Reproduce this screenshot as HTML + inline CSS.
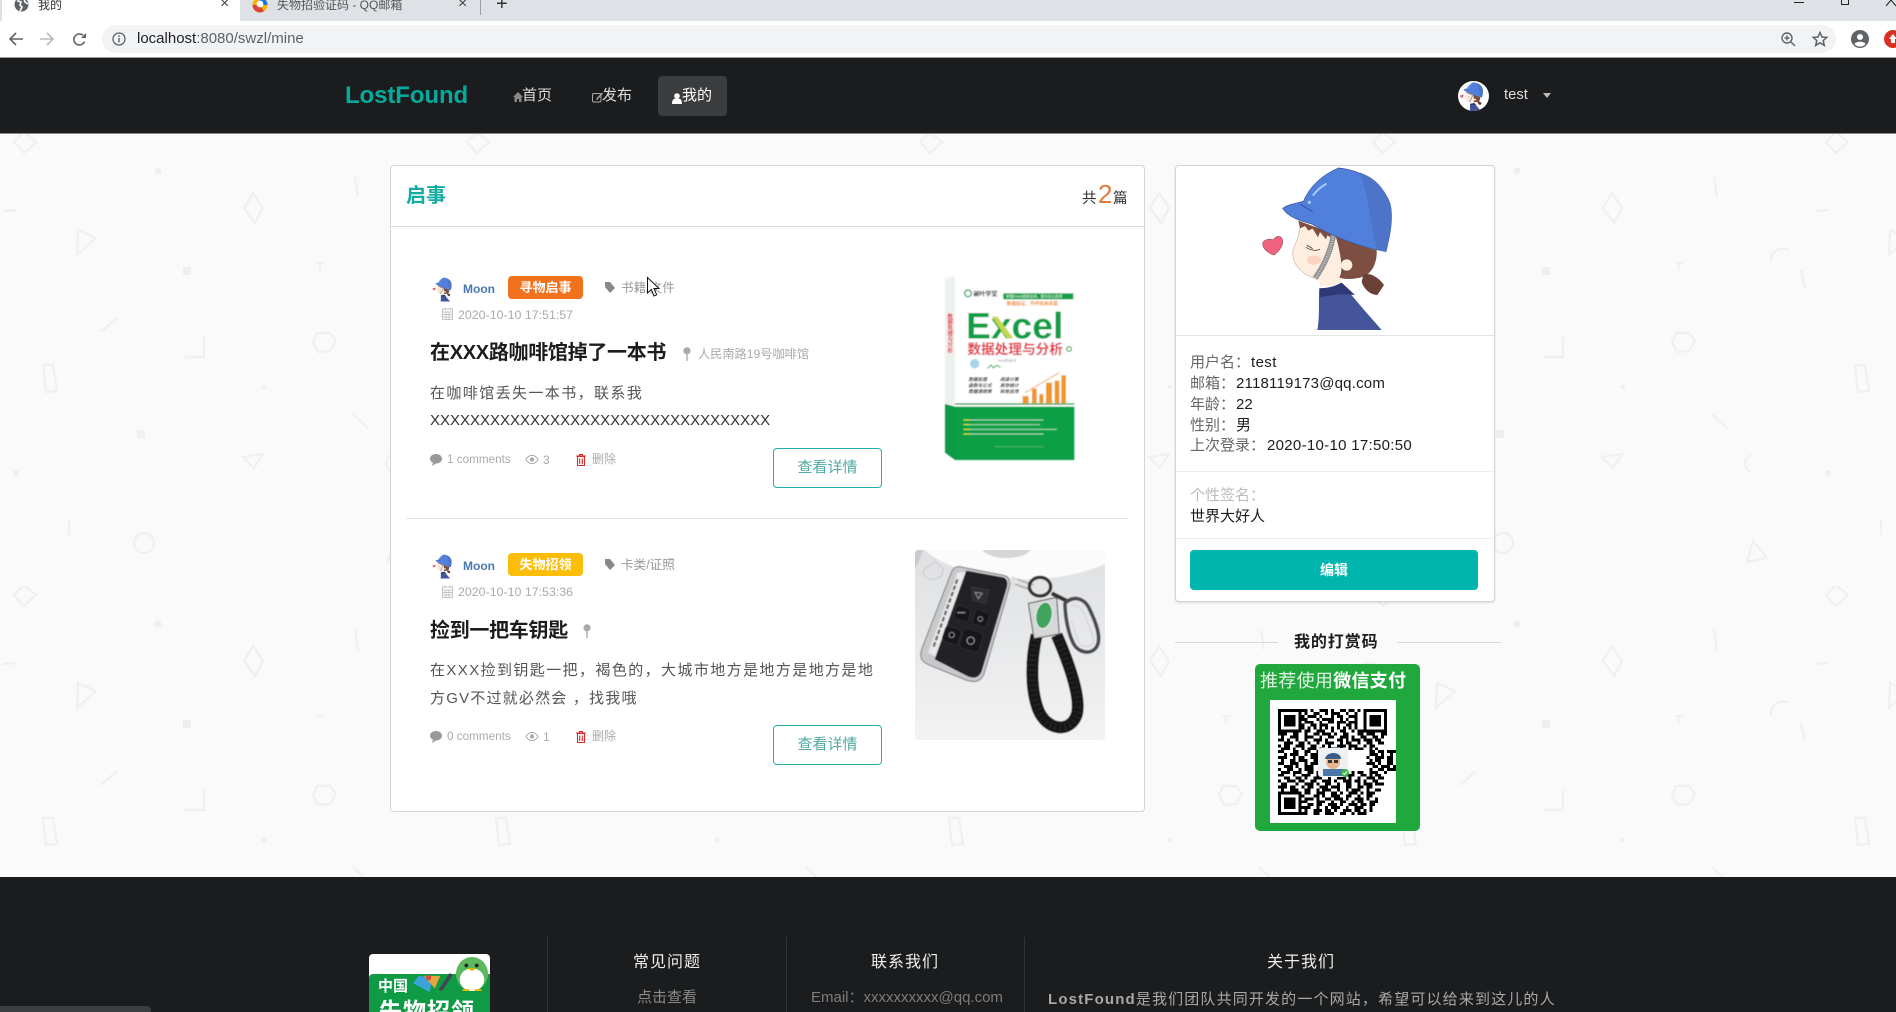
<!DOCTYPE html>
<html lang="zh"><head><meta charset="utf-8"><title>我的</title>
<style>
*{box-sizing:border-box}
html,body{margin:0;padding:0;width:1896px;height:1012px;overflow:hidden;background:#fafafa;font-family:"Liberation Sans","Noto Sans CJK SC",sans-serif}
.a{position:absolute}
.t{position:absolute;white-space:nowrap;line-height:20px;height:20px}
svg{position:absolute;overflow:visible}
.meta{font-size:12.4px;color:#aaa}
.title{font-size:20px;font-weight:700;color:#1b1c1d;letter-spacing:-.3px;line-height:28px;height:28px}
.desc{font-size:15px;color:#555}
.btn{position:absolute;width:109px;height:40px;border:1px solid #1fb0a8;border-radius:4px;background:#fff;color:#4fa9a2;font-size:15px;text-align:center;line-height:38px}
.badge{position:absolute;width:75px;height:23px;border-radius:4px;color:#fff;font-weight:700;font-size:13px;text-align:center;line-height:23px}
.lab{color:#666}.val{color:#1b1c1d}
</style></head><body>
<svg width="0" height="0" style="position:absolute">
<defs>
<filter id="soft" x="-5%" y="-5%" width="110%" height="110%"><feGaussianBlur stdDeviation="1.2"/></filter>
<symbol id="girl" viewBox="0 0 540 540">
<path d="M232 510C240 470 235 420 238 385C270 385 290 375 305 368C345 420 390 470 425 510Z" fill="#44559c"/>
<path d="M238 385C270 385 290 378 305 368L345 405C310 400 270 405 240 412Z" fill="#2e3a78"/>
<path d="M178 195C180 215 175 235 165 255C156 272 158 290 163 305C175 330 195 345 222 355L238 362L240 380C265 380 290 375 305 368L300 340L320 250L285 225L200 195Z" fill="#fdeee0"/>
<path d="M178 205C178 225 172 240 163 258C156 272 158 290 163 305C175 330 195 345 222 355" fill="none" stroke="#b9978a" stroke-width="1.5"/>
<path d="M285 222C310 240 380 265 410 270C412 310 395 340 370 350C340 360 310 358 298 352C312 330 300 270 285 222Z" fill="#7d4e42"/>
<path d="M370 345C385 335 415 350 432 375L412 405C390 405 370 385 365 365Z" fill="#6b4036"/>
<circle cx="320" cy="315" r="17" fill="#fdeee0"/>
<path d="M175 182C195 190 235 205 290 224L285 240L262 226L258 238L240 216L234 232L218 206L205 212L195 198L180 205Z" fill="#7d4e42"/>
<path d="M280 222C275 270 250 320 225 355" fill="none" stroke="#8d8d8d" stroke-width="16"/>
<path d="M280 222C275 270 250 320 225 355" fill="none" stroke="#c9c9c9" stroke-width="9" stroke-dasharray="3 4"/>
<ellipse cx="222" cy="300" rx="22" ry="14" fill="#f9d3c4"/>
<path d="M198 262Q220 276 240 268M200 255L218 266" fill="none" stroke="#5a3a30" stroke-width="2.5"/>
<path d="M128 145C145 132 170 130 190 124C205 90 235 50 295 24C360 30 425 65 450 130C462 175 448 235 438 275L410 269C340 255 265 222 215 192C180 182 145 172 128 145Z" fill="#5080dc" stroke="#3a4f90" stroke-width="2"/>
<path d="M360 38C410 55 435 90 450 130C462 175 448 235 438 275L410 269C395 200 385 110 360 38Z" fill="#4d74c8"/>
<path d="M220 105Q235 85 258 72" fill="none" stroke="#a6c6f6" stroke-width="6" stroke-linecap="round"/>
<circle cx="208" cy="127" r="5" fill="#a6c6f6"/>
<path d="M180 132Q200 145 218 155" fill="none" stroke="#2f4c94" stroke-width="2.5"/>
<path d="M100 240C108 225 128 225 128 245C128 262 112 278 102 285C90 282 68 268 68 252C70 238 90 235 100 240Z" fill="#f0627f" stroke="#a84a5c" stroke-width="2"/>
</symbol>
<pattern id="bg" patternUnits="userSpaceOnUse" width="453" height="453" patternTransform="translate(0,133)">
<g transform="translate(0,-133)" fill="none" stroke="#f0f0f0" stroke-width="2.2">
<path d="M24 132L36 142L24 153L14 142Z"/>
<circle cx="158" cy="171" r="3.6" fill="#efefef" stroke="none"/>
<path d="M355 177L358 197"/>
<path d="M253 193L263 208L255 223L244 208Z"/>
<path d="M3 211L16 210"/>
<path d="M78 230L96 238L77 255Z"/>
<rect x="183" y="267" width="8" height="8" fill="#efefef" stroke="none"/>
<path d="M316 263L324 263M320 263L320 270" stroke-width="1.6"/>
<path d="M101 332L117 318"/>
<path d="M185 357L204 357L204 337"/>
<path d="M317 333L330 333L336 341L330 351L318 352L313 342Z"/>
<path d="M43 365L53 365L57 391L46 392Z"/>
<circle cx="264" cy="387" r="2.2" fill="#efefef" stroke="none"/>
<path d="M353 414L369 429"/>
<rect x="137" y="430" width="8" height="8" fill="#efefef" stroke="none"/>
<path d="M243 457L263 454L254 468Z"/>
<circle cx="16" cy="473" r="3" fill="#efefef" stroke="none"/>
<path d="M392 455A9 9 0 0 0 392 472"/>
<path d="M69 520L69 535"/>
<circle cx="144" cy="543" r="10"/>
<path d="M394 541L408 558L388 562Z"/>
<path d="M412 262A12 12 0 0 1 430 250"/>
<path d="M442 270L446 288"/>
</g></pattern>
</defs></svg>

<!-- page background -->
<svg style="left:0;top:0" width="1896" height="1012"><rect width="1896" height="1012" fill="#fafafa"/><rect width="1896" height="1012" fill="url(#bg)"/></svg>

<!-- browser chrome -->
<div class="a" style="left:0;top:0;width:1896px;height:21px;background:#dee1e6"></div>
<div class="a" style="left:2px;top:0;width:238px;height:21px;background:#fff"></div>
<div class="a" style="left:0;top:21px;width:1896px;height:36px;background:#fff"></div>
<div class="a" style="left:102px;top:25px;width:1734px;height:28px;background:#f1f3f4;border-radius:14px"></div>
<div class="a" style="left:0;top:57px;width:1896px;height:1px;background:#999"></div>
<svg style="left:14px;top:-3px" width="15" height="15" viewBox="0 0 15 15"><circle cx="7.5" cy="7.5" r="7" fill="#5f6368"/><path d="M3 3.5L7 5L6 8L8 10L6 14M10 2L11 5L14 7" stroke="#fff" stroke-width="1.6" fill="none"/></svg>
<div class="t" style="left:38px;top:-5px;font-size:12px;color:#333">我的</div>
<div class="t" style="left:220px;top:-6px;font-size:16px;color:#444">×</div>
<svg style="left:252px;top:-3px" width="16" height="16" viewBox="0 0 16 16"><circle cx="8" cy="8" r="7.5" fill="#f4b400"/><path d="M8 8L.5 8A7.5 7.5 0 0 0 12 14.3Z" fill="#db4437"/><path d="M8 8L15.5 8A7.5 7.5 0 0 0 8 .5Z" fill="#1a73e8"/><circle cx="8" cy="7" r="3.4" fill="#fff"/></svg>
<div class="t" style="left:277px;top:-5px;font-size:12px;color:#555">失物招验证码 - QQ邮箱</div>
<div class="t" style="left:458px;top:-6px;font-size:16px;color:#444">×</div>
<div class="a" style="left:480px;top:0;width:1px;height:15px;background:#9aa0a6"></div>
<div class="t" style="left:496px;top:-6px;font-size:20px;color:#333">+</div>
<div class="a" style="left:1794px;top:2px;width:10px;height:1px;background:#222"></div>
<div class="a" style="left:1841px;top:0;width:8px;height:5px;border:1px solid #222;border-top:0"></div>
<svg style="left:1886px;top:0" width="10" height="6"><path d="M0 6L5 0L10 6" stroke="#222" fill="none"/></svg>
<svg style="left:8px;top:31px" width="16" height="16" viewBox="0 0 16 16"><path d="M15 8H2M8 2L2 8L8 14" fill="none" stroke="#5f6368" stroke-width="1.6"/></svg>
<svg style="left:39px;top:31px" width="16" height="16" viewBox="0 0 16 16"><path d="M1 8H14M8 2L14 8L8 14" fill="none" stroke="#b8bbbf" stroke-width="1.6"/></svg>
<svg style="left:72px;top:32px" width="15" height="15" viewBox="0 0 15 15"><path d="M12.5 9.5A5.5 5.5 0 1 1 11 3.3" fill="none" stroke="#5f6368" stroke-width="1.6"/><path d="M14 1V6H9Z" fill="#5f6368"/></svg>
<svg style="left:112px;top:32px" width="14" height="14" viewBox="0 0 14 14"><circle cx="7" cy="7" r="6" fill="none" stroke="#5f6368" stroke-width="1.3"/><path d="M7 6V10.5M7 3.5V5" stroke="#5f6368" stroke-width="1.4"/></svg>
<div class="t" style="left:137px;top:29px;font-size:15px;color:#202124">localhost<span style="color:#5f6368">:8080/swzl/mine</span></div>
<svg style="left:1781px;top:32px" width="15" height="15" viewBox="0 0 15 15"><circle cx="6" cy="6" r="5" fill="none" stroke="#5f6368" stroke-width="1.4"/><path d="M9.5 9.5L14 14M3.5 6H8.5M6 3.5V8.5" stroke="#5f6368" stroke-width="1.4"/></svg>
<svg style="left:1812px;top:31px" width="16" height="16" viewBox="0 0 16 16"><path d="M8 1.5L10 6L14.8 6.4L11.2 9.6L12.3 14.4L8 11.8L3.7 14.4L4.8 9.6L1.2 6.4L6 6Z" fill="none" stroke="#5f6368" stroke-width="1.5"/></svg>
<svg style="left:1851px;top:30px" width="18" height="18" viewBox="0 0 18 18"><circle cx="9" cy="9" r="9" fill="#5f6368"/><circle cx="9" cy="7" r="3" fill="#fff"/><path d="M3.5 14C5 11 13 11 14.5 14A7 7 0 0 1 3.5 14Z" fill="#fff"/></svg>
<svg style="left:1884px;top:30px" width="18" height="18" viewBox="0 0 18 18"><circle cx="9" cy="9" r="9" fill="#d93025"/><path d="M9 4L13 9H11V13H7V9H5Z" fill="#fff"/></svg>

<!-- navbar -->
<div class="a" style="left:0;top:58px;width:1896px;height:75px;background:#1b1c1e"></div>
<div class="a" style="left:0;top:133px;width:1896px;height:1px;background:#888"></div>
<div class="t" style="left:345px;top:86px;font-size:24px;font-weight:700;color:#06a99c;letter-spacing:-.1px">LostFound</div>
<svg style="left:513px;top:91px" width="10" height="11" viewBox="0 0 10 11"><path d="M5 1L0 6H1.5V11H4V8H6V11H8.5V6H10Z" fill="#888"/></svg>
<div class="t" style="left:522px;top:86px;font-size:15px;color:#ddd">首页</div>
<svg style="left:592px;top:91px" width="11" height="12" viewBox="0 0 11 12"><rect x=".5" y="2.5" width="8.5" height="8.5" rx="1.5" fill="none" stroke="#aaa"/><path d="M4 8L10 1.5L11 2.5L5 9Z" fill="#aaa"/></svg>
<div class="t" style="left:602px;top:86px;font-size:15px;color:#ddd">发布</div>
<div class="a" style="left:658px;top:76px;width:69px;height:40px;background:#3b3c3e;border-radius:4px"></div>
<svg style="left:672px;top:93px" width="10" height="11" viewBox="0 0 10 11"><circle cx="5" cy="3" r="2.8" fill="#fff"/><path d="M0 11C0 6 2 5.5 5 5.5C8 5.5 10 6 10 11Z" fill="#fff"/></svg>
<div class="t" style="left:682px;top:86px;font-size:15px;color:#fff">我的</div>
<div class="a" style="left:1458px;top:81px;width:31px;height:30px;border-radius:50%;background:#fff;overflow:hidden"><svg style="left:-2px;top:0" width="32" height="32"><use href="#girl" width="32" height="32"/></svg></div>
<div class="t" style="left:1504px;top:85px;font-size:14.8px;color:#ddd">test</div>
<svg style="left:1543px;top:93px" width="8" height="5"><path d="M0 0H8L4 5Z" fill="#bbb"/></svg>

<!-- main card -->
<div class="a" style="left:390px;top:165px;width:755px;height:647px;background:#fff;border:1px solid #d4d4d5;border-radius:4px"></div>
<div class="a" style="left:391px;top:226px;width:753px;height:1px;background:#d9d9da"></div>
<div class="t" style="left:406px;top:186px;font-size:20px;font-weight:700;color:#12aca3">启事</div>
<div class="t" style="left:1082px;top:189px;font-size:14.5px;color:#333">共</div>
<div class="t" style="left:1098px;top:184px;font-size:26px;color:#e07b39">2</div>
<div class="t" style="left:1113px;top:189px;font-size:14.5px;color:#333">篇</div>

<!-- item 1 -->
<svg style="left:431px;top:277px" width="22" height="25" viewBox="60 10 400 510"><use href="#girl" width="540" height="540"/></svg>
<div class="t" style="left:463px;top:279px;font-size:12px;font-weight:700;color:#4a78b0">Moon</div>
<div class="badge" style="left:508px;top:276px;background:#f2711c">寻物启事</div>
<svg style="left:605px;top:282px" width="10" height="11" viewBox="0 0 10 11"><path d="M0 0H5L10 6L5 11L0 5Z" fill="#888"/></svg>
<div class="t" style="left:621px;top:278px;font-size:12.6px;color:#999">书籍/文件</div>
<svg style="left:442px;top:307px" width="11" height="13" viewBox="0 0 11 13"><rect x=".5" y="2" width="10" height="10.5" fill="none" stroke="#c4c4c4"/><path d="M.5 2H10.5V5H.5ZM3 .5V3M8 .5V3M.5 7.5H10.5M.5 10H10.5M4 5V12M7 5V12" fill="none" stroke="#c4c4c4"/></svg>
<div class="t meta" style="left:458px;top:305px">2020-10-10 17:51:57</div>
<div class="t title" style="left:430px;top:339px">在XXX路咖啡馆掉了一本书</div>
<svg style="left:683px;top:347px" width="8" height="14" viewBox="0 0 8 14"><circle cx="4" cy="3.8" r="3.6" fill="#aaa"/><rect x="3.3" y="6" width="1.4" height="8" fill="#aaa"/></svg>
<div class="t meta" style="left:698px;top:344px;font-size:12.2px">人民南路19号咖啡馆</div>
<div class="t desc" style="left:430px;top:384px;letter-spacing:1.4px">在咖啡馆丢失一本书，联系我</div>
<div class="t desc" style="left:430px;top:411px;color:#333">XXXXXXXXXXXXXXXXXXXXXXXXXXXXXXXXXX</div>
<svg style="left:430px;top:454px" width="12" height="12" viewBox="0 0 12 12"><path d="M6 0C9.5 0 12 2 12 4.8C12 7.5 9.5 9.5 6 9.5L2 12L3 8.8C1 8 0 6.5 0 4.8C0 2 2.5 0 6 0Z" fill="#999"/></svg>
<div class="t meta" style="left:447px;top:450px;font-size:11.7px">1 comments</div>
<svg style="left:526px;top:455px" width="12" height="9" viewBox="0 0 12 9"><path d="M0 4.5C3 -1 9 -1 12 4.5C9 10 3 10 0 4.5Z" fill="none" stroke="#aaa"/><circle cx="6" cy="4.5" r="2.2" fill="#aaa"/></svg>
<div class="t meta" style="left:543px;top:450px;font-size:12px">3</div>
<svg style="left:576px;top:454px" width="10" height="12" viewBox="0 0 10 12"><path d="M0 2H10M3.5 2V.5H6.5V2M1.5 2.5H8.5V11.5H1.5ZM3.7 4.5V10M6.3 4.5V10" fill="none" stroke="#db2828" stroke-width="1.1"/></svg>
<div class="t meta" style="left:592px;top:449px;font-size:12px">删除</div>
<div class="btn" style="left:773px;top:448px">查看详情</div>

<!-- book -->
<svg style="left:910px;top:260px" width="210" height="210" viewBox="0 0 630 630">
<g filter="url(#soft)">
<path d="M105 55L135 48L135 600L105 578Z" fill="#eef2ee"/>
<rect x="135" y="48" width="358" height="552" fill="#fff"/>
<path d="M105 432L135 440V600L105 578Z" fill="#119a49"/>
<rect x="135" y="440" width="358" height="160" fill="#0e9f45"/>
<rect x="135" y="430" width="358" height="4" fill="#119a49"/>
<rect x="280" y="100" width="210" height="18" fill="#0e9f45"/>
<text x="288" y="112" font-size="11" fill="#fff">掌握Excel函数技术，提升办公效率</text>
<text x="290" y="135" font-size="14" fill="#f28a1a" font-weight="700">数据验证、丹柯范函表面</text>
<circle cx="174" cy="100" r="10" fill="none" stroke="#0e9f45" stroke-width="4"/>
<text x="190" y="108" font-size="18" font-weight="700" fill="#222">副叶学堂</text>
<text x="168" y="235" font-size="112" font-weight="700" fill="#0e9f45" textLength="292" lengthAdjust="spacingAndGlyphs">Excel</text>
<path d="M262 170L310 235H290L245 170Z" fill="#c5d84a"/>
<text x="172" y="282" font-size="41" font-weight="700" fill="#e2353f">数据处理与分析</text>
<circle cx="477" cy="267" r="7" fill="none" stroke="#0e9f45" stroke-width="3.5"/>
<text x="116" y="160" font-size="17" font-weight="700" fill="#e2353f" writing-mode="tb">数据处理与分析</text>
<circle cx="194" cy="311" r="14" fill="#a6d5ea"/>
<path d="M232 325L244 315L250 324L260 316L272 322" fill="none" stroke="#0e9f45" stroke-width="3"/>
<text x="264" y="305" font-size="8" fill="#888">Excel研究组 著</text>
<g font-size="14" font-weight="700" font-style="italic" fill="#333">
<text x="175" y="363">数据处理</text><text x="270" y="363">阅读计算</text>
<text x="175" y="381">函数与公式</text><text x="270" y="381">库存统计</text>
<text x="175" y="399">数据透视表</text><text x="270" y="399">财务应用</text></g>
<g fill="#f0952a"><rect x="338" y="408" width="18" height="22"/><rect x="366" y="386" width="14" height="44"/><rect x="388" y="402" width="12" height="28"/><rect x="408" y="368" width="18" height="62"/><rect x="434" y="362" width="14" height="68"/><rect x="454" y="346" width="14" height="84"/></g>
<path d="M345 398L448 338" stroke="#f0952a" stroke-width="2.5"/>
<path d="M165 480H400M165 494H390M165 508H440M165 522H400" stroke="#a9d8b8" stroke-width="3"/>
<path d="M160 480H180M160 494H180M160 508H180M160 522H180" stroke="#dbe93a" stroke-width="3"/>
<path d="M255 560H400" stroke="#5cbc7e" stroke-width="2"/>
</g></svg>

<div class="a" style="left:406px;top:518px;width:722px;height:1px;background:#e0e1e2"></div>

<!-- item 2 -->
<svg style="left:431px;top:554px" width="22" height="25" viewBox="60 10 400 510"><use href="#girl" width="540" height="540"/></svg>
<div class="t" style="left:463px;top:556px;font-size:12px;font-weight:700;color:#4a78b0">Moon</div>
<div class="badge" style="left:508px;top:553px;background:#fbbd08">失物招领</div>
<svg style="left:605px;top:559px" width="10" height="11" viewBox="0 0 10 11"><path d="M0 0H5L10 6L5 11L0 5Z" fill="#888"/></svg>
<div class="t" style="left:621px;top:555px;font-size:12.6px;color:#999">卡类/证照</div>
<svg style="left:442px;top:585px" width="11" height="13" viewBox="0 0 11 13"><rect x=".5" y="2" width="10" height="10.5" fill="none" stroke="#c4c4c4"/><path d="M.5 2H10.5V5H.5ZM3 .5V3M8 .5V3M.5 7.5H10.5M.5 10H10.5M4 5V12M7 5V12" fill="none" stroke="#c4c4c4"/></svg>
<div class="t meta" style="left:458px;top:582px">2020-10-10 17:53:36</div>
<div class="t title" style="left:430px;top:617px">捡到一把车钥匙</div>
<svg style="left:583px;top:624px" width="8" height="14" viewBox="0 0 8 14"><circle cx="4" cy="3.8" r="3.6" fill="#aaa"/><rect x="3.3" y="6" width="1.4" height="8" fill="#aaa"/></svg>
<div class="t desc" style="left:430px;top:661px;letter-spacing:1.4px">在XXX捡到钥匙一把，褐色的，大城市地方是地方是地方是地</div>
<div class="t desc" style="left:430px;top:689px;letter-spacing:1.2px">方GV不过就必然会 ，找我哦</div>
<svg style="left:430px;top:731px" width="12" height="12" viewBox="0 0 12 12"><path d="M6 0C9.5 0 12 2 12 4.8C12 7.5 9.5 9.5 6 9.5L2 12L3 8.8C1 8 0 6.5 0 4.8C0 2 2.5 0 6 0Z" fill="#999"/></svg>
<div class="t meta" style="left:447px;top:727px;font-size:11.7px">0 comments</div>
<svg style="left:526px;top:732px" width="12" height="9" viewBox="0 0 12 9"><path d="M0 4.5C3 -1 9 -1 12 4.5C9 10 3 10 0 4.5Z" fill="none" stroke="#aaa"/><circle cx="6" cy="4.5" r="2.2" fill="#aaa"/></svg>
<div class="t meta" style="left:543px;top:727px;font-size:12px">1</div>
<svg style="left:576px;top:731px" width="10" height="12" viewBox="0 0 10 12"><path d="M0 2H10M3.5 2V.5H6.5V2M1.5 2.5H8.5V11.5H1.5ZM3.7 4.5V10M6.3 4.5V10" fill="none" stroke="#db2828" stroke-width="1.1"/></svg>
<div class="t meta" style="left:592px;top:726px;font-size:12px">删除</div>
<div class="btn" style="left:773px;top:725px">查看详情</div>

<!-- keys photo -->
<svg style="left:900px;top:540px" width="220" height="210" viewBox="0 0 660 630">
<defs><clipPath id="kc"><rect x="45" y="30" width="570" height="570" rx="10"/></clipPath>
<linearGradient id="kg" x1="0" y1="0" x2="0" y2="1"><stop offset="0" stop-color="#dfe0e2"/><stop offset=".5" stop-color="#e8e9ea"/><stop offset="1" stop-color="#f3f3f4"/></linearGradient></defs>
<g clip-path="url(#kc)"><g filter="url(#soft)">
<rect x="40" y="25" width="580" height="580" fill="url(#kg)"/>
<path d="M70 25C150 110 420 160 620 70V25Z" fill="#fbfbfb"/>
<ellipse cx="320" cy="22" rx="75" ry="32" fill="#d5d6d8"/>
<path d="M40 25H70C60 60 50 80 40 90Z" fill="#c9cacc"/>
<path d="M70 90L105 65L130 85L125 110L90 120L70 105Z" fill="none" stroke="#bbb" stroke-width="2"/>
<path d="M178 80L312 106C328 110 332 124 328 142L252 402C240 428 222 428 198 420L85 374C62 364 58 350 66 325L153 100C158 86 168 78 178 80Z" fill="#c8c9cb" stroke="#77787a" stroke-width="3"/>
<path d="M199 92L310 112C322 116 324 130 320 144L245 394C236 414 222 416 205 410L104 358Z" fill="#222326"/>
<path d="M172 98L196 96L106 350L84 338Z" fill="#e9e9ea"/>
<path d="M172 118L100 322" stroke="#666" stroke-width="7" stroke-dasharray="14 6"/>
<path d="M214 140L268 150L258 190L218 182Z" fill="#2e2f32" stroke="#4c4d50"/><path d="M225 157L246 160L235 176Z" fill="none" stroke="#999" stroke-width="2.5"/>
<rect x="165" y="200" width="45" height="42" rx="8" fill="#17181a" stroke="#4c4d50" transform="rotate(18 187 221)"/><path d="M172 218H196" stroke="#aaa" stroke-width="3"/>
<rect x="220" y="212" width="45" height="46" rx="8" fill="#17181a" stroke="#4c4d50" transform="rotate(18 242 235)"/><circle cx="241" cy="237" r="7" fill="none" stroke="#aaa" stroke-width="2"/>
<rect x="130" y="262" width="50" height="48" rx="10" fill="#17181a" stroke="#4c4d50" transform="rotate(18 155 286)"/><circle cx="155" cy="285" r="8" fill="none" stroke="#aaa" stroke-width="2"/>
<rect x="183" y="270" width="62" height="62" rx="14" fill="#17181a" stroke="#4c4d50" transform="rotate(18 214 301)"/><circle cx="212" cy="302" r="11" fill="none" stroke="#aaa" stroke-width="2.5"/>
<path d="M325 125L395 150M335 112L400 135" stroke="#aaa" stroke-width="5"/>
<circle cx="341" cy="122" r="9" fill="none" stroke="#e8e8e8" stroke-width="4"/>
<ellipse cx="420" cy="140" rx="32" ry="28" fill="none" stroke="#333" stroke-width="10"/>
<path d="M410 285C392 360 392 450 415 510C440 570 505 580 528 530C545 490 520 400 470 285" fill="none" stroke="#141416" stroke-width="36"/>
<path d="M410 285C392 360 392 450 415 510C440 570 505 580 528 530C545 490 520 400 470 285" fill="none" stroke="#2c2c30" stroke-width="26" stroke-dasharray="3 12"/>
<path d="M385 190L470 172L478 282L402 296Z" fill="#d6d7d9" stroke="#444" stroke-width="3"/>
<ellipse cx="432" cy="226" rx="24" ry="40" fill="#3fa45f" stroke="#fff" stroke-width="2" transform="rotate(10 432 226)"/>
<path d="M455 160L505 185" stroke="#333" stroke-width="12"/>
<path d="M495 190C520 165 550 175 565 200C590 250 605 295 590 320C575 345 535 340 520 310C505 280 495 230 495 190Z" fill="none" stroke="#4a4b4f" stroke-width="11"/>
<path d="M510 200C530 190 545 205 555 225L580 295C585 320 550 330 535 305L513 240" fill="none" stroke="#d5d6d8" stroke-width="4"/>
</g></g></svg>

<!-- mouse cursor -->
<svg style="left:647px;top:277px" width="13" height="20" viewBox="0 0 13 20"><path d="M.5 .5V16L4.3 12.5L7 19L9.7 17.8L7 11.5H12Z" fill="#fff" stroke="#111"/></svg>

<!-- profile card -->
<div class="a" style="left:1175px;top:165px;width:320px;height:437px;background:#fff;border:1px solid #d4d4d5;border-radius:4px;box-shadow:0 1px 2px rgba(0,0,0,.12)"></div>
<svg style="left:1240px;top:160px" width="180" height="180"><use href="#girl" width="180" height="180"/></svg>
<div class="a" style="left:1176px;top:335px;width:318px;height:1px;background:#e4e4e5"></div>
<div class="t lab" style="left:1190px;top:353px;font-size:15px">用户名：</div><div class="t val" style="left:1251px;top:353px;font-size:15px;letter-spacing:.4px">test</div>
<div class="t lab" style="left:1190px;top:374px;font-size:15px">邮箱：</div><div class="t val" style="left:1236px;top:374px;font-size:15px;letter-spacing:.2px">2118119173@qq.com</div>
<div class="t lab" style="left:1190px;top:395px;font-size:15px">年龄：</div><div class="t val" style="left:1236px;top:395px;font-size:15px">22</div>
<div class="t lab" style="left:1190px;top:416px;font-size:15px">性别：</div><div class="t val" style="left:1236px;top:416px;font-size:15px">男</div>
<div class="t lab" style="left:1190px;top:436px;font-size:15px">上次登录：</div><div class="t val" style="left:1267px;top:436px;font-size:15px;letter-spacing:.3px">2020-10-10 17:50:50</div>
<div class="a" style="left:1176px;top:471px;width:318px;height:1px;background:#eeeeef"></div>
<div class="t" style="left:1190px;top:486px;font-size:15px;color:#bbb">个性签名：</div>
<div class="t val" style="left:1190px;top:507px;font-size:15px">世界大好人</div>
<div class="a" style="left:1176px;top:538px;width:318px;height:1px;background:#eeeeef"></div>
<div class="a" style="left:1190px;top:550px;width:288px;height:40px;background:#00b5ad;border-radius:4px;color:#fff;font-size:14px;font-weight:700;text-align:center;line-height:40px">编辑</div>

<!-- reward -->
<div class="a" style="left:1175px;top:642px;width:103px;height:1px;background:#d9d9da"></div>
<div class="a" style="left:1397px;top:642px;width:104px;height:1px;background:#d9d9da"></div>
<div class="t" style="left:1294px;top:633px;font-size:16px;font-weight:700;color:#1b1c1d;letter-spacing:.9px">我的打赏码</div>
<div class="a" style="left:1255px;top:664px;width:165px;height:167px;background:#21a83c;border-radius:5px"></div>
<div class="t" style="left:1260px;top:671px;font-size:18px;color:#dff3e2;letter-spacing:.3px">推荐使用<b style="color:#fff">微信支付</b></div>
<div class="a" style="left:1270px;top:700px;width:126px;height:123px;background:#fff"></div>
<svg style="left:1278px;top:709px" width="109" height="106" viewBox="0 0 37 36" shape-rendering="crispEdges">
<path stroke="#000" stroke-width="1" fill="none" d="
M8 .5h2m1 0h1m2 0h3m1 0h1m2 0h2m1 0h2m1 0h1
M9 1.5h1m2 0h2m2 0h1m1 0h3m2 0h1m2 0h1
M8 2.5h1m1 0h3m1 0h1m3 0h1m1 0h2m2 0h3
M8 3.5h2m3 0h1m1 0h4m2 0h1m1 0h1m2 0h1
M9 4.5h3m2 0h1m2 0h2m1 0h3m1 0h3
M8 5.5h1m2 0h2m1 0h3m3 0h1m2 0h2m1 0h1
M8 6.5h1m1 0h1m1 0h1m1 0h1m1 0h1m1 0h1m1 0h1m1 0h1m1 0h1m1 0h1
M9 7.5h2m2 0h3m2 0h1m2 0h2m2 0h1m1 0h2
M0 8.5h3m2 0h2m2 0h1m2 0h2m1 0h3m1 0h1m2 0h2m3 0h2m1 0h3m2 0h2
M1 9.5h1m2 0h3m2 0h3m2 0h1m2 0h2m2 0h3m1 0h1m2 0h2m2 0h2m1 0h1
M0 10.5h2m1 0h1m2 0h1m2 0h1m2 0h3m1 0h1m3 0h2m1 0h1m1 0h3m1 0h3m1 0h2
M2 11.5h3m2 0h2m1 0h1m2 0h1m2 0h3m2 0h1m1 0h2m2 0h1m2 0h2m2 0h2
M0 12.5h1m1 0h2m2 0h3m2 0h2m2 0h1m1 0h1m2 0h3m1 0h3m2 0h1m1 0h2
M1 13.5h3m1 0h1m2 0h1m1 0h3m1 0h1m2 0h3m1 0h1m2 0h1m1 0h3m2 0h1m1 0h1
M0 14.5h2m3 0h2m2 0h2m2 0h1m17 0h2m1 0h2m1 0h3
M2 15.5h1m1 0h3m2 0h1m1 0h3m17 0h3m1 0h1m2 0h1
M0 16.5h3m2 0h1m1 0h2m2 0h3m16 0h1m2 0h3m1 0h2
M1 17.5h1m2 0h2m1 0h3m2 0h2m17 0h1m1 0h2m2 0h2
M0 18.5h2m2 0h3m2 0h1m1 0h3m16 0h3m1 0h1m2 0h2
M2 19.5h3m1 0h1m2 0h3m2 0h1m17 0h2m1 0h3m1 0h1
M0 20.5h1m2 0h2m2 0h1m1 0h3m2 0h1m16 0h1m2 0h2m1 0h3
M1 21.5h3m1 0h3m2 0h2m1 0h2m2 0h2m2 0h2m2 0h1m1 0h2m2 0h3m2 0h1
M0 22.5h2m3 0h1m2 0h3m2 0h1m1 0h3m1 0h2m2 0h3m2 0h2m1 0h1m1 0h2
M2 23.5h2m2 0h2m1 0h1m2 0h3m2 0h1m2 0h3m1 0h1m2 0h1m2 0h3m1 0h2
M0 24.5h1m2 0h3m1 0h2m2 0h2m2 0h3m1 0h1m2 0h3m1 0h2m1 0h1m2 0h2
M1 25.5h2m3 0h1m2 0h3m1 0h1m2 0h2m2 0h1m2 0h2m2 0h1m1 0h3m1 0h3
M0 26.5h3m1 0h2m2 0h1m1 0h2m2 0h3m1 0h3m2 0h2m2 0h2m1 0h2
M1 27.5h1m2 0h3m2 0h2m2 0h1m1 0h3m2 0h1m2 0h1m1 0h3m2 0h1m2 0h2
M9 28.5h2m2 0h3m2 0h2m1 0h1m2 0h3m1 0h1m1 0h3
M8 29.5h1m3 0h2m1 0h1m2 0h3m2 0h2m2 0h1m2 0h2
M9 30.5h3m1 0h1m2 0h2m1 0h3m1 0h1m2 0h3m1 0h1m2 0h1
M8 31.5h2m3 0h3m2 0h1m2 0h2m2 0h1m1 0h2m2 0h3
M10 32.5h2m1 0h2m2 0h3m1 0h1m2 0h3m1 0h2m1 0h2
M8 33.5h3m2 0h1m2 0h1m1 0h3m2 0h1m2 0h3m2 0h1
M9 34.5h1m2 0h3m1 0h2m1 0h1m2 0h3m1 0h2m1 0h1m1 0h1
M8 35.5h2m2 0h2m2 0h3m2 0h2m2 0h1m1 0h3"/>
<g fill="none" stroke="#000"><rect x=".5" y=".5" width="7" height="7" stroke-width="1"/><rect x="29.5" y=".5" width="7" height="7"/><rect x=".5" y="28.5" width="7" height="7"/></g>
<rect x="2" y="2" width="4" height="4"/><rect x="31" y="2" width="4" height="4"/><rect x="2" y="30" width="4" height="4"/>
</svg>
<div class="a" style="left:1318px;top:748px;width:30px;height:29px;background:#eef1f3;border-radius:3px"></div>
<svg style="left:1320px;top:750px" width="27" height="26" viewBox="0 0 27 26"><rect x="3" y="19" width="21" height="7" fill="#4a77a8"/><circle cx="13" cy="12" r="7" fill="#e9b48c"/><path d="M5 9C6 1 21 1 21 9Z" fill="#3c5c8a"/><rect x="8" y="10" width="4" height="3" fill="#333"/><rect x="14" y="10" width="4" height="3" fill="#333"/></svg>
<svg style="left:1341px;top:769px" width="8" height="8" viewBox="0 0 8 8"><circle cx="4" cy="4" r="4" fill="#39b54a"/><path d="M2 4L3.5 5.5L6 2.5" stroke="#fff" fill="none"/></svg>

<!-- footer -->
<div class="a" style="left:0;top:877px;width:1896px;height:135px;background:#1b1c1e"></div>
<div class="a" style="left:0;top:1006px;width:151px;height:6px;background:#3c3d3f;border-radius:0 4px 0 0"></div>
<div class="a" style="left:369px;top:954px;width:121px;height:58px;background:#fff;border-radius:4px 4px 0 0;overflow:hidden">
<div class="a" style="left:0;top:20px;width:121px;height:38px;background:#0f9a45;border-radius:4px 0 0 0"></div>
<div class="t" style="left:9px;top:23px;font-size:15px;font-weight:700;color:#fff">中国</div>
<div class="t" style="left:10px;top:44px;font-size:23px;font-weight:700;color:#fff;letter-spacing:1px;line-height:26px">失物招领</div>
<svg style="left:42px;top:20px" width="45" height="20" viewBox="0 0 45 22"><path d="M0 10L18 20L22 4L6 2Z" fill="#3aa3d8"/><path d="M12 2L30 2L24 16Z" fill="#e8a33a"/><path d="M30 18L42 0" stroke="#445" stroke-width="4"/><circle cx="17" cy="4" r="3" fill="#d84a3a"/></svg>
<svg style="left:86px;top:2px" width="34" height="36" viewBox="0 0 36 38"><ellipse cx="18" cy="19" rx="17" ry="18" fill="#5cb85c"/><ellipse cx="18" cy="25" rx="13" ry="12" fill="#fff"/><circle cx="12" cy="10" r="2" fill="#222"/><circle cx="23" cy="10" r="2" fill="#222"/><path d="M13 13H23L18 16Z" fill="#f4b400"/><path d="M8 36H15M21 36H28" stroke="#f4b400" stroke-width="2"/></svg>
</div>
<div class="a" style="left:547px;top:937px;width:1px;height:75px;background:#333436"></div>
<div class="a" style="left:786px;top:937px;width:1px;height:75px;background:#333436"></div>
<div class="a" style="left:1024px;top:937px;width:1px;height:75px;background:#333436"></div>
<div class="t" style="left:633px;top:953px;font-size:16px;color:#eee;letter-spacing:1px">常见问题</div>
<div class="t" style="left:637px;top:988px;font-size:15px;color:#8a8a8a">点击查看</div>
<div class="t" style="left:871px;top:953px;font-size:16px;color:#eee;letter-spacing:1px">联系我们</div>
<div class="t" style="left:811px;top:988px;font-size:15px;color:#7c7c7c">Email：xxxxxxxxxx@qq.com</div>
<div class="t" style="left:1267px;top:953px;font-size:16px;color:#eee;letter-spacing:1px">关于我们</div>
<div class="t" style="left:1048px;top:990px;font-size:15px;color:#a8a8a8;letter-spacing:1.15px"><b>LostFound</b>是我们团队共同开发的一个网站，希望可以给来到这儿的人</div>
</body></html>
